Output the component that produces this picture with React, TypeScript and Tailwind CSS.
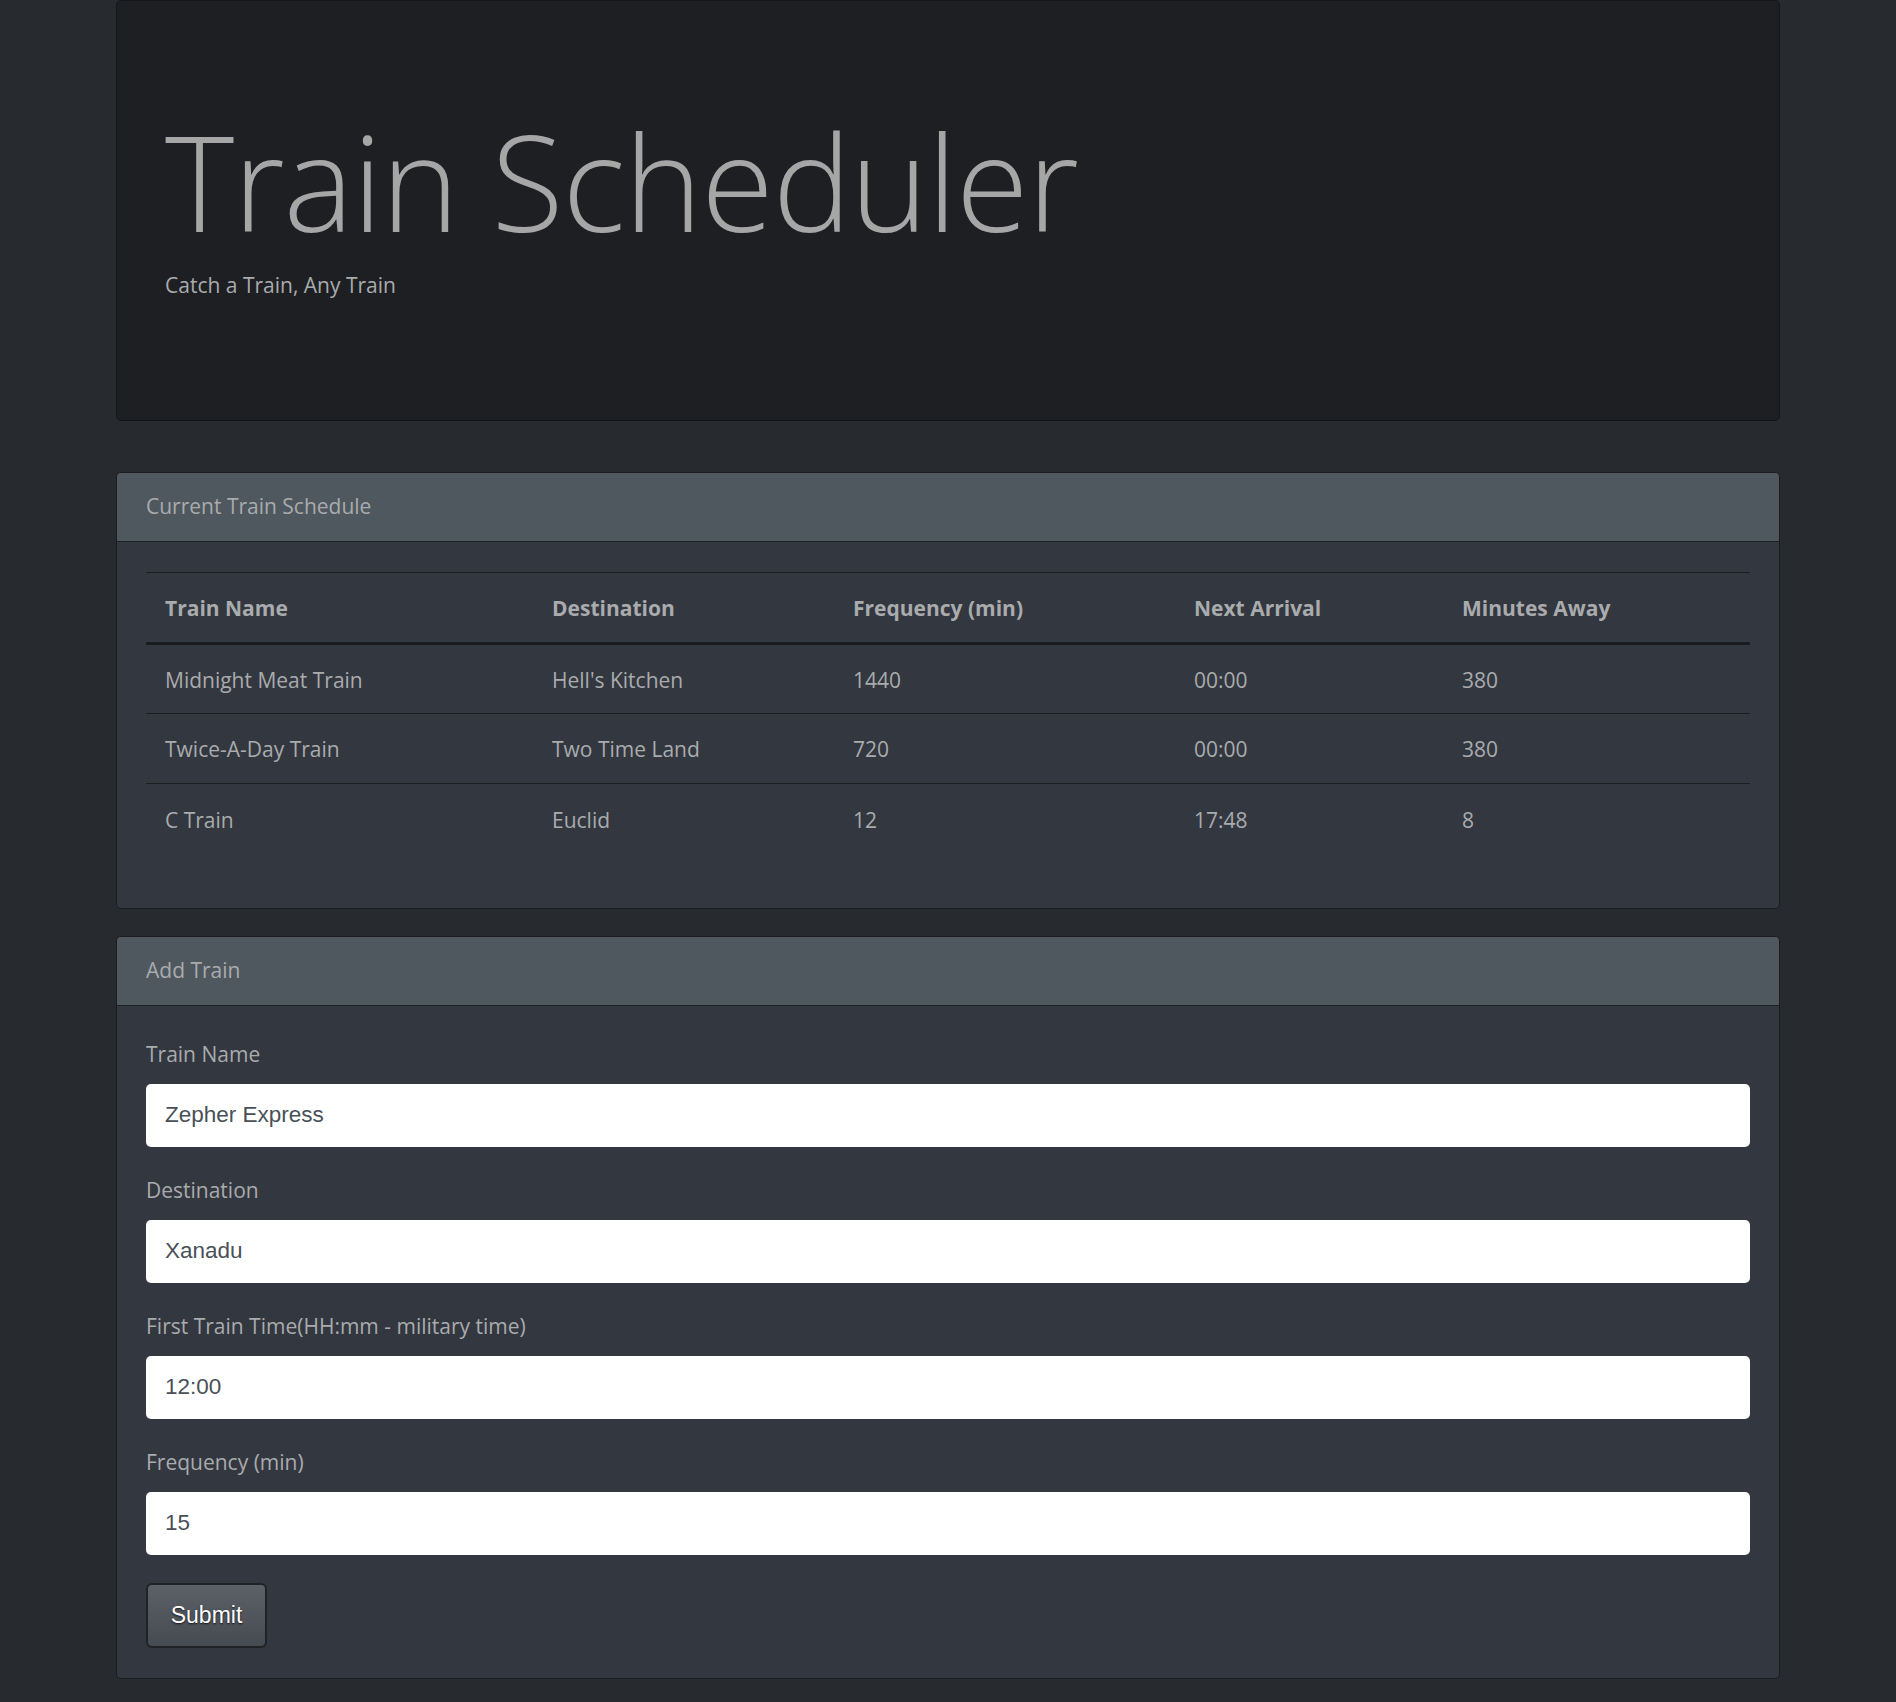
import React from 'react';

interface Train {
  name: string;
  destination: string;
  frequency: number;
  nextArrival: string;
  minutesAway: number;
}

const trains: Train[] = [
  { name: 'Midnight Meat Train', destination: "Hell's Kitchen", frequency: 1440, nextArrival: '00:00', minutesAway: 380 },
  { name: 'Twice-A-Day Train', destination: 'Two Time Land', frequency: 720, nextArrival: '00:00', minutesAway: 380 },
  { name: 'C Train', destination: 'Euclid', frequency: 12, nextArrival: '17:48', minutesAway: 8 },
];

const fields = [
  { label: 'Train Name', value: 'Zepher Express' },
  { label: 'Destination', value: 'Xanadu' },
  { label: 'First Train Time(HH:mm - military time)', value: '12:00' },
  { label: 'Frequency (min)', value: '15' },
];

const sans = "font-['Segoe_UI','Open_Sans',sans-serif]";

function Panel({ title, children, className }: { title: string; children: React.ReactNode; className?: string }) {
  return (
    <div className={`rounded-[5px] border border-[#1b1c1f] bg-[#333740] overflow-hidden ${className ?? ''}`}>
      <div className="h-[69px] flex items-center px-[29px] bg-[#50585f] border-b border-[#1f2125] text-[21px] text-[#a9abad]">
        {title}
      </div>
      {children}
    </div>
  );
}

export default function App() {
  return (
    <div className={`min-h-screen bg-[#272a2f] pb-[25px] ${sans}`}>
      <div className="w-[1664px] mx-auto">
        {/* jumbotron */}
        <div className="h-[421px] rounded-[5px] border border-[#141517] bg-[#1e1f23] pt-[101px] px-[48px]">
          <h1 className="text-[132px] leading-[1.2] font-light text-[#a6a6a6] tracking-[-1px]">Train Scheduler</h1>
          <p className="mt-[10px] text-[21px] leading-[30px] text-[#a9abad]">Catch a Train, Any Train</p>
        </div>

        <Panel title="Current Train Schedule" className="mt-[51px]">
          <div className="px-[29px] pt-[30px] pb-[34px]">
            <table className="w-full border-collapse text-left text-[21px] text-[#a9abad] mb-[20px]">
              <thead>
                <tr className="border-t border-[#1c1d20] border-b-[3px] border-b-[#1a1b1e]">
                  <th className="w-[387px] h-[71px] px-[19px] pt-[3px] font-bold">Train Name</th>
                  <th className="w-[301px] px-[19px] pt-[3px] font-bold">Destination</th>
                  <th className="w-[341px] px-[19px] pt-[3px] font-bold">Frequency (min)</th>
                  <th className="w-[268px] px-[19px] pt-[3px] font-bold">Next Arrival</th>
                  <th className="px-[19px] pt-[3px] font-bold">Minutes Away</th>
                </tr>
              </thead>
              <tbody>
                {trains.map((t, i) => (
                  <tr key={t.name} className={i > 0 ? 'border-t border-[#1c1d20]' : ''}>
                    <td className="h-[70px] px-[19px] pt-[3px]">{t.name}</td>
                    <td className="px-[19px] pt-[3px]">{t.destination}</td>
                    <td className="px-[19px] pt-[3px]">{t.frequency}</td>
                    <td className="px-[19px] pt-[3px]">{t.nextArrival}</td>
                    <td className="px-[19px] pt-[3px]">{t.minutesAway}</td>
                  </tr>
                ))}
              </tbody>
            </table>
          </div>
        </Panel>

        <Panel title="Add Train" className="mt-[27px]">
          <form className="px-[29px] pt-[33px] pb-[30px]" onSubmit={(e) => e.preventDefault()}>
            {fields.map((f) => (
              <div key={f.label} className="mb-[28px]">
                <label className="block text-[21px] leading-[30px] text-[#a9abad] mb-[15px]">{f.label}</label>
                <input
                  defaultValue={f.value}
                  className="block w-full h-[63px] rounded-[5px] bg-white px-[19px] text-[22.5px] text-[#495057] font-['Liberation_Sans',Arial,sans-serif] outline-none"
                />
              </div>
            ))}
            <button
              type="submit"
              className="w-[121px] h-[65px] rounded-[6px] border-2 border-[#202226] bg-gradient-to-b from-[#5c6168] to-[#464b52] text-white text-[23px] font-['Liberation_Sans',Arial,sans-serif] [text-shadow:0_1px_2px_rgba(0,0,0,0.8)]"
            >
              Submit
            </button>
          </form>
        </Panel>
      </div>
    </div>
  );
}
